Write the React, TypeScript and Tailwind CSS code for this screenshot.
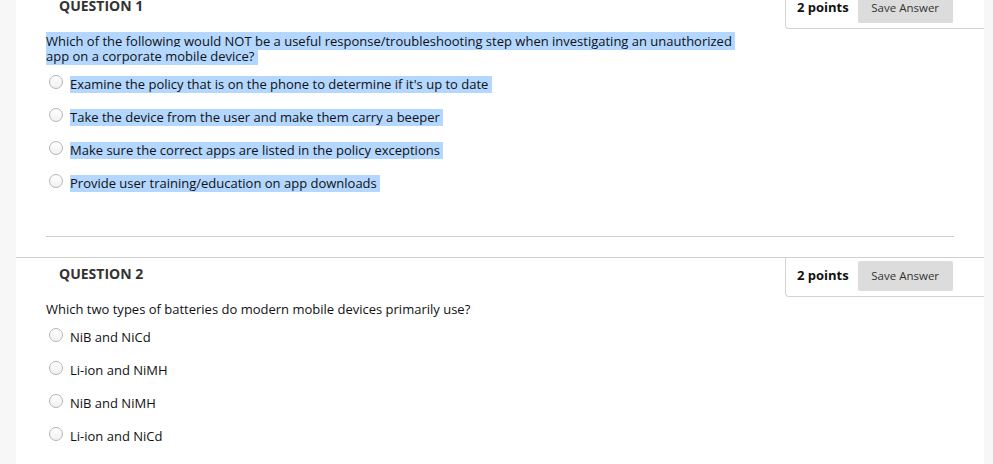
import React from 'react';

const hl = 'bg-[#b3d7fe]';

const Radio: React.FC = () => (
  <span className="mt-[-6px] mr-[7px] inline-block h-[14px] w-[14px] shrink-0 rounded-full border border-[#b5b5b5] bg-gradient-to-b from-white to-[#f1f1f1]" />
);

interface HeaderProps {
  title: string;
}

const QuestionHeader: React.FC<HeaderProps> = ({ title }) => (
  <div className="flex h-[40px] items-start justify-between">
    <div className="pl-[43px] pt-[6px] text-[14px] font-bold text-[#333]">{title}</div>
    <div className="flex h-[40px] w-[199px] items-start rounded-bl-[4px] border-b border-l border-[#d3d3d3] pt-[4px] pl-[11px]">
      <span className="mt-[5px] text-[13px] font-bold text-[#111]">2 points</span>
      <button className="ml-[9px] h-[30px] w-[95px] rounded-[2px] bg-[#dcdcdc] text-[11.5px] text-[#333]">
        Save Answer
      </button>
    </div>
  </div>
);

interface OptionsProps {
  options: string[];
  highlighted?: boolean;
}

const Options: React.FC<OptionsProps> = ({ options, highlighted }) => (
  <div className="flex flex-col">
    {options.map((o) => (
      <div key={o} className="flex h-[33px] items-center pl-[33px]">
        <Radio />
        <span className={`text-[13px] leading-[17px] text-[#111] ${highlighted ? hl : ''}`}>
          {highlighted ? o + '\u00a0' : o}
        </span>
      </div>
    ))}
  </div>
);

const App: React.FC = () => {
  return (
    <div
      className="flex h-[464px] w-full overflow-hidden bg-[#f7f7f7]"
      style={{ fontFamily: '"Open Sans", "Noto Sans", sans-serif' }}
    >
      <div className="ml-[16px] w-[968px] bg-white">
        <div className="mt-[-11px]">
          <QuestionHeader title="QUESTION 1" />
          <div className="pl-[30px] pt-[5px] text-[13px] leading-[15px] text-[#111]">
            <span className={hl}>
              Which of the following would NOT be a useful response/troubleshooting step when investigating an unauthorized{'\u00a0'}
            </span>
            <br />
            <span className={hl}>app on a corporate mobile device?{'\u00a0'}</span>
          </div>
          <div className="mt-[4px]">
            <Options
              highlighted
              options={[
                "Examine the policy that is on the phone to determine if it's up to date",
                'Take the device from the user and make them carry a beeper',
                'Make sure the correct apps are listed in the policy exceptions',
                'Provide user training/education on app downloads',
              ]}
            />
          </div>
          <div className="ml-[30px] mr-[30px] mt-[36px] border-t border-[#cfcfcf]" />
          <div className="mt-[20px] border-t border-[#cfcfcf]" />
        </div>
        <div className="mt-[-1px]">
          <QuestionHeader title="QUESTION 2" />
          <div className="pl-[30px] pt-[5px] text-[13px] leading-[15px] text-[#111]">
            Which two types of batteries do modern mobile devices primarily use?
          </div>
          <div className="mt-[4px]">
            <Options options={['NiB and NiCd', 'Li-ion and NiMH', 'NiB and NiMH', 'Li-ion and NiCd']} />
          </div>
        </div>
      </div>
    </div>
  );
};

export default App;
